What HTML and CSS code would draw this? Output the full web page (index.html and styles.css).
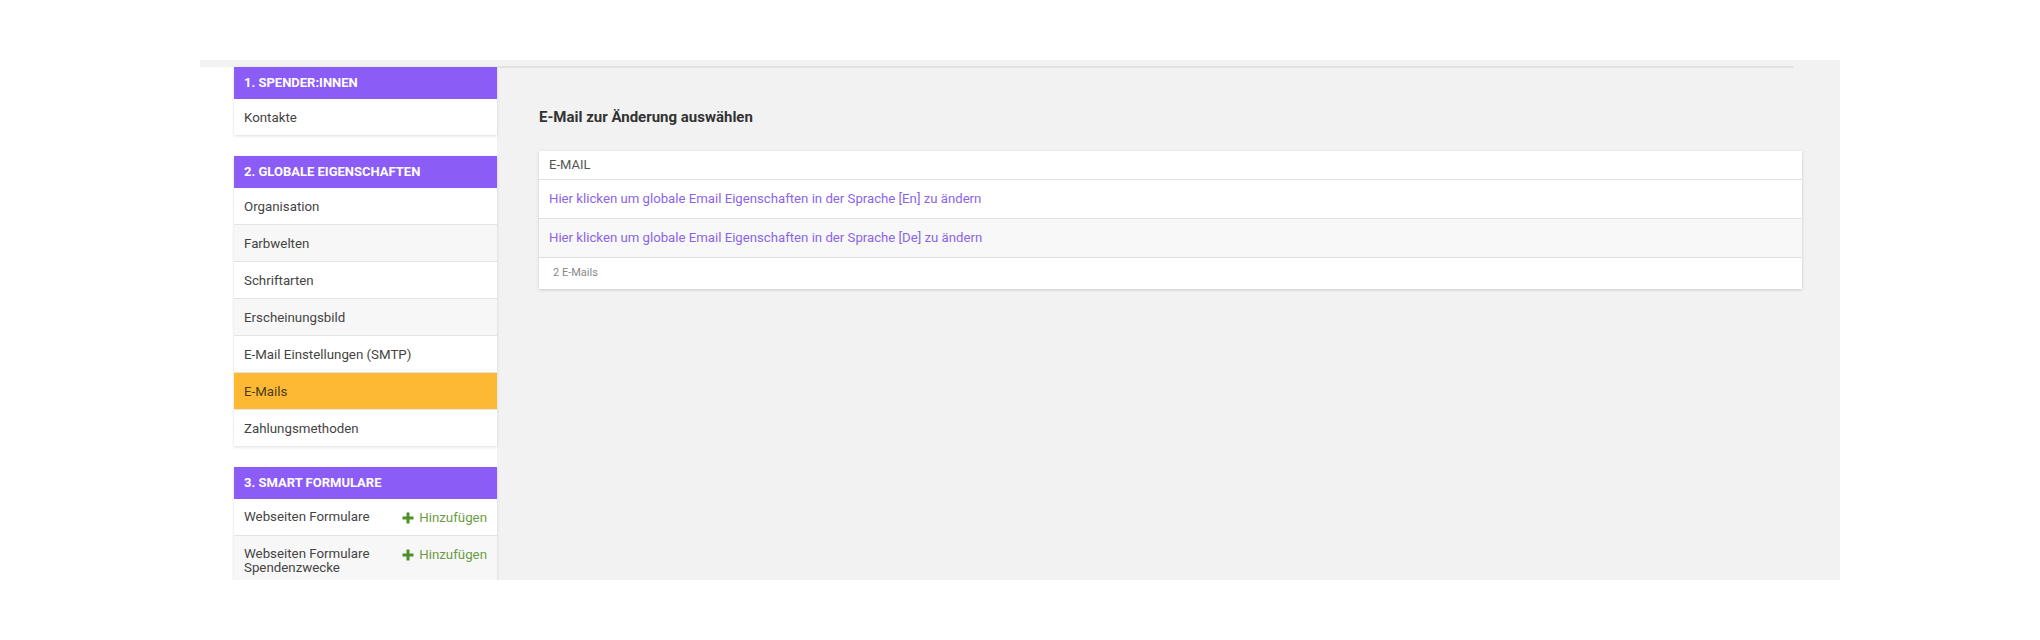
FILE: index.html
```html
<!DOCTYPE html>
<html>
	<head>
		<meta charset="utf-8">
		<title>E-Mails</title>
		<link rel="stylesheet" href="styles.css">
	</head>
	<body>
		<div class="page">
			<div class="side-col">
				<div class="side">
					<div class="group">
						<div class="group-title">1. Spender:innen</div>
						<a class="item" href="#">Kontakte</a>
					</div>
					<div class="group">
						<div class="group-title">2. Globale Eigenschaften</div>
						<a class="item" href="#">Organisation</a>
						<a class="item" href="#">Farbwelten</a>
						<a class="item" href="#">Schriftarten</a>
						<a class="item" href="#">Erscheinungsbild</a>
						<a class="item" href="#">E-Mail Einstellungen (SMTP)</a>
						<a class="item active" href="#">E-Mails</a>
						<a class="item" href="#">Zahlungsmethoden</a>
					</div>
					<div class="group">
						<div class="group-title">3. Smart Formulare</div>
						<div class="item">
							<span class="label">Webseiten Formulare</span>
							<a class="add" href="#">
								<svg width="12" height="12" viewBox="0 0 12 12"><path d="M6 0.5v11M0.5 6h11" stroke="#4f8f2a" stroke-width="3"/></svg>
								Hinzufügen
							</a>
						</div>
						<div class="item">
							<span class="label">Webseiten Formulare Spendenzwecke</span>
							<a class="add" href="#">
								<svg width="12" height="12" viewBox="0 0 12 12"><path d="M6 0.5v11M0.5 6h11" stroke="#4f8f2a" stroke-width="3"/></svg>
								Hinzufügen
							</a>
						</div>
					</div>
				</div>
			</div>
			<div class="content">
				<div class="top-line"></div>
				<div class="inner">
					<h1 class="title">E-Mail zur Änderung auswählen</h1>
					<div class="table">
						<div class="th">E-Mail</div>
						<a class="tr" href="#">Hier klicken um globale Email Eigenschaften in der Sprache [En] zu ändern</a>
						<a class="tr" href="#">Hier klicken um globale Email Eigenschaften in der Sprache [De] zu ändern</a>
						<div class="tfoot">2 E-Mails</div>
					</div>
				</div>
			</div>
		</div>
	</body>
</html>
```

FILE: styles.css
```css
*{
    margin: 0;
    padding: 0;
    box-sizing: border-box;
}
a{
    text-decoration: none;
}
body{
    background-color: #fff;
    font: 13px/15px Roboto, "Liberation Sans", Arial, sans-serif;
    color: #444;
}
.page{
    display: flex;
    width: 1640px;
    height: 520px;
    margin: 60px 0 0 200px;
    background-color: #f2f2f2;
    overflow: hidden;
}
.side-col{
    width: 297px;
    padding-top: 7px;
}
.side{
    height: 100%;
    padding-left: 34px;
    background-color: #fff;
}
.group{
    background-color: #fff;
    margin-bottom: 21px;
    box-shadow: 0 1px 3px rgba(0, 0, 0, 0.14);
}
.group-title{
    padding: 9px 10px;
    line-height: 14px;
    font-size: 13px;
    font-weight: bold;
    text-transform: uppercase;
    color: #fff;
    background-color: #8b5cf6;
}
.item{
    display: flex;
    justify-content: space-between;
    align-items: flex-start;
    padding: 11px 10px 10px;
    font-size: 13.3px;
    color: #444;
    background-color: #fff;
    border-bottom: 1px solid #e4e4e4;
}
.item:last-child{
    border-bottom: 0;
}
.item:nth-child(odd){
    background-color: #f7f7f7;
}
.item.active{
    background-color: #fdb933;
    color: #4a3d1e;
}
.item .label{
    width: 140px;
    line-height: 14px;
}
.add{
    display: flex;
    align-items: center;
    gap: 5px;
    color: #6c9c42;
    white-space: nowrap;
}
.content{
    flex: 1;
}
.top-line{
    margin: 6px 47px 0 0;
    border-top: 2px solid #e1e1e1;
}
.inner{
    padding: 0 38px 0 42px;
}
.title{
    margin: 39px 0 24px;
    font-size: 15px;
    line-height: 20px;
    font-weight: bold;
    color: #333;
}
.table{
    background-color: #fff;
    box-shadow: 0 1px 3px rgba(0, 0, 0, 0.16);
}
.th{
    height: 29px;
    padding: 6px 10px;
    line-height: 16px;
    text-transform: uppercase;
    color: #555;
    border-bottom: 1px solid #e1e1e1;
}
.tr{
    display: block;
    height: 39px;
    padding: 11px 10px;
    line-height: 16px;
    font-size: 13.2px;
    color: #8a65e6;
    border-bottom: 1px solid #e1e1e1;
}
.tr:nth-child(odd){
    background-color: #f8f8f8;
}
.tfoot{
    height: 31px;
    padding: 8px 14px;
    line-height: 14px;
    font-size: 11px;
    color: #888;
}
```
